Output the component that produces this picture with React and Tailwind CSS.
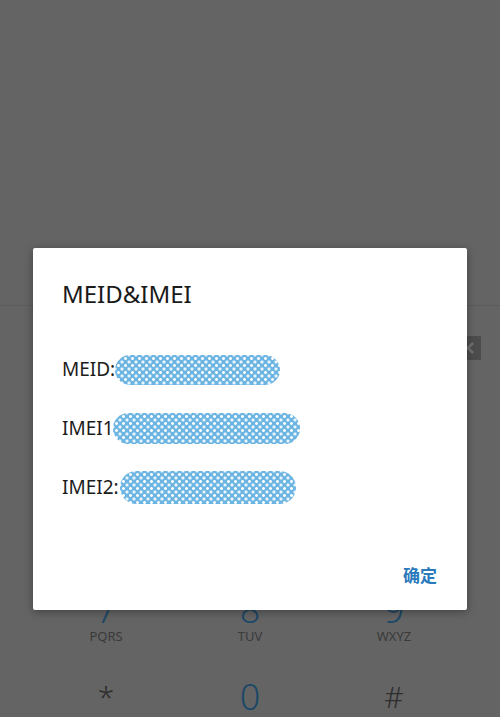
import React from "react";

const keys = [
  ["7", "PQRS"], ["8", "TUV"], ["9", "WXYZ"],
  ["*", "(P)"], ["0", ""], ["#", "(W)"],
];

function Redacted({ className }) {
  return (
    <span
      className={
        "inline-block rounded-full bg-[#6cb5e3] bg-[radial-gradient(circle,#ffffff_1.1px,transparent_1.7px),radial-gradient(circle,#ffffff_1.1px,transparent_1.7px)] bg-[length:7px_7px] bg-[position:0_0,3.5px_3.5px] " +
        className
      }
    />
  );
}

function Row({ label, blob }) {
  return (
    <div className="flex h-[59px] items-center">
      <span className="text-[19px] text-[#1c1c1c]">{label}</span>
      {blob}
    </div>
  );
}

export default function App() {
  return (
    <div className="relative h-[717px] w-[500px] overflow-hidden bg-[#646464] font-['Noto_Sans','Noto_Sans_CJK_SC',sans-serif]">
      {/* dimmed dialer screen */}
      <div className="flex h-full flex-col">
        <div className="h-[306px] shrink-0 border-b border-[#5c5c5c]" />
        <div className="flex h-[84px] shrink-0 items-center justify-end pr-[19px]">
          <svg width="28" height="24" viewBox="0 0 28 24">
            <path d="M8 0h20v24H8L0 12z" fill="#4c4c4c" />
            <path d="M20 7l-5 5 5 5" stroke="#707070" strokeWidth="2.5" fill="none" />
          </svg>
        </div>
        {/* keypad rows 1-3 sit under the dialog */}
        <div className="h-[189px] shrink-0" />
        <div className="grid shrink-0 grid-cols-3 grid-rows-[87px_87px] px-[34px] pt-[1px]">
          {keys.map(([d, l]) => (
            <div key={d} className="flex flex-col items-center pt-[13px]">
              {d === "*" || d === "#" ? (
                <span className="text-[30px] font-light leading-[34px] text-[#2e2e2e]">{d}</span>
              ) : (
                <span className="text-[36px] font-light leading-[34px] text-[#1c4868]">{d}</span>
              )}
              <span className="mt-[1px] text-[13px] leading-[16px] text-[#3a3a3a]">{l}</span>
            </div>
          ))}
        </div>
      </div>

      {/* MEID & IMEI dialog */}
      <div className="absolute left-[33px] top-[248px] flex h-[362px] w-[434px] flex-col rounded-[2px] bg-white pl-[29px] pr-[30px] shadow-[0_2px_8px_rgba(0,0,0,0.35)]">
        <div className="pt-[30px] text-[24px] leading-[32px] text-[#1a1a1a]">MEID&amp;IMEI</div>
        <div className="mt-[30px] flex flex-col">
          <Row label="MEID:" blob={<Redacted className="h-[30px] w-[165px]" />} />
          <Row label="IMEI1" blob={<Redacted className="-ml-[1px] h-[31px] w-[187px]" />} />
          <Row label="IMEI2:" blob={<Redacted className="ml-[1px] h-[33px] w-[176px]" />} />
        </div>
        <div className="mt-auto flex justify-end pb-[22px]">
          <span className="text-[17px] font-bold text-[#2a79bb]">确定</span>
        </div>
      </div>
    </div>
  );
}
